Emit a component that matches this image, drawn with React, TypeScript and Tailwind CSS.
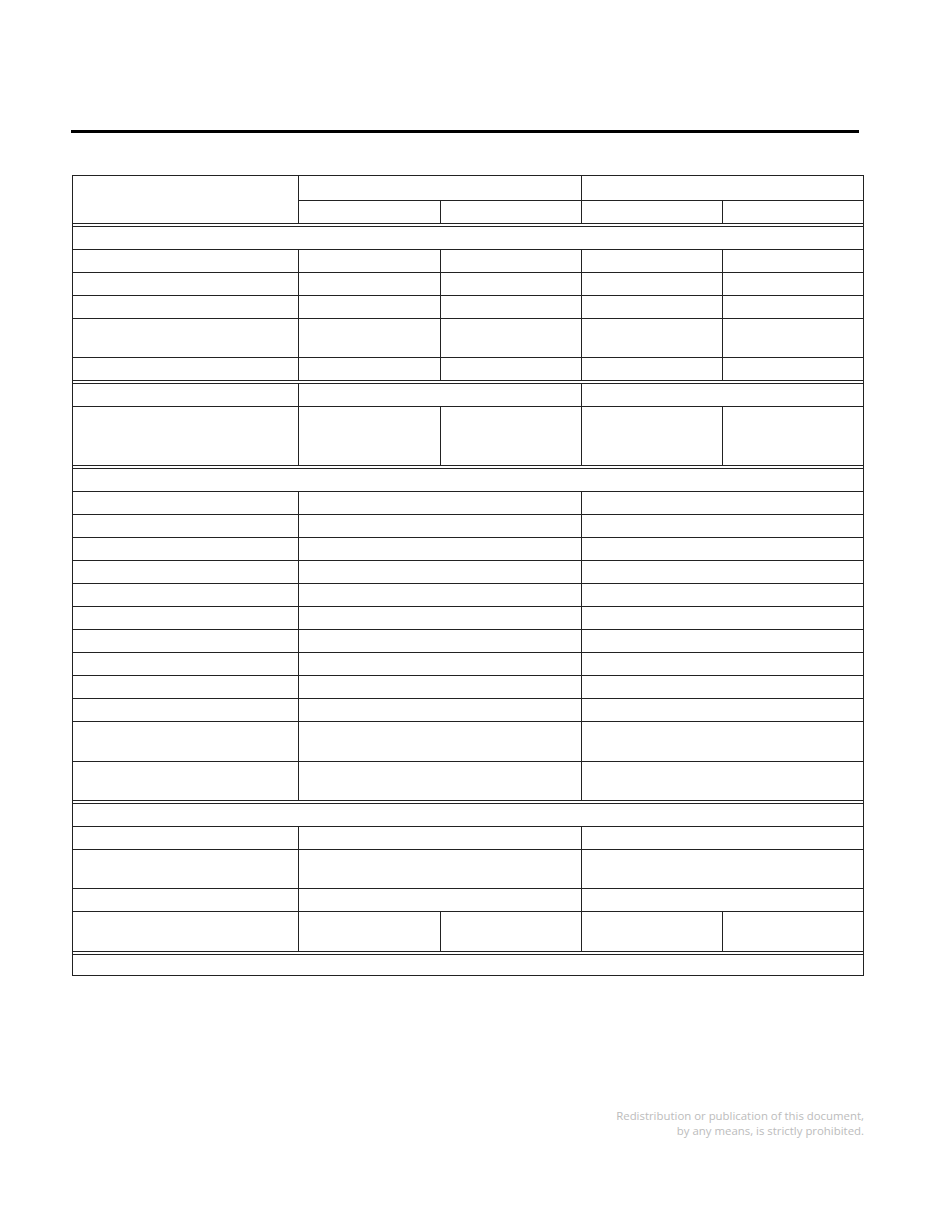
const LINE = "border-[#222]"

// column widths include each cell's right border
const C1 = "w-[226px]"
const C2 = "w-[142px]"
const C3 = "w-[141px]"
const C4 = "w-[141px]"
const C5 = "w-[141px]"
const C23 = "w-[283px]"
const C45 = "w-[282px]"

function Cell({ w, h }: { w: string; h: string }) {
  return <div className={`${w} ${h} shrink-0 border-r border-b ${LINE}`} />
}

function FiveRow({ h }: { h: string }) {
  return (
    <div className="flex">
      <Cell w={C1} h={h} />
      <Cell w={C2} h={h} />
      <Cell w={C3} h={h} />
      <Cell w={C4} h={h} />
      <Cell w={C5} h={h} />
    </div>
  )
}

function ThreeRow({ h }: { h: string }) {
  return (
    <div className="flex">
      <Cell w={C1} h={h} />
      <Cell w={C23} h={h} />
      <Cell w={C45} h={h} />
    </div>
  )
}

function FullRow({ h }: { h: string }) {
  return (
    <div className="flex">
      <Cell w="w-[791px]" h={h} />
    </div>
  )
}

// double rule: 2px gap then a second line
function Spacer() {
  return <FullRow h="h-[3px]" />
}

export default function App() {
  return (
    <div className="w-[935px] h-[1210px] bg-white relative" style={{ fontFamily: '"Open Sans", "Noto Sans", sans-serif' }}>
      <div className="pt-[130px]">
        <div className="ml-[71px] w-[788px] h-[3px] bg-black" />
      </div>

      <div className={`ml-[72px] mt-[42px] w-[792px] border-t border-l ${LINE}`}>
        {/* header */}
        <div className="flex">
          <Cell w={C1} h="h-[48px]" />
          <div className="flex flex-col">
            <div className="flex">
              <Cell w={C23} h="h-[25px]" />
              <Cell w={C45} h="h-[25px]" />
            </div>
            <div className="flex">
              <Cell w={C2} h="h-[23px]" />
              <Cell w={C3} h="h-[23px]" />
              <Cell w={C4} h="h-[23px]" />
              <Cell w={C5} h="h-[23px]" />
            </div>
          </div>
        </div>
        <Spacer />

        <FullRow h="h-[23px]" />
        <FiveRow h="h-[23px]" />
        <FiveRow h="h-[23px]" />
        <FiveRow h="h-[23px]" />
        <FiveRow h="h-[39px]" />
        <FiveRow h="h-[23px]" />
        <Spacer />

        <ThreeRow h="h-[23px]" />
        <FiveRow h="h-[59px]" />
        <Spacer />

        <FullRow h="h-[23px]" />
        <ThreeRow h="h-[23px]" />
        <ThreeRow h="h-[23px]" />
        <ThreeRow h="h-[23px]" />
        <ThreeRow h="h-[23px]" />
        <ThreeRow h="h-[23px]" />
        <ThreeRow h="h-[23px]" />
        <ThreeRow h="h-[23px]" />
        <ThreeRow h="h-[23px]" />
        <ThreeRow h="h-[23px]" />
        <ThreeRow h="h-[23px]" />
        <ThreeRow h="h-[40px]" />
        <ThreeRow h="h-[39px]" />
        <Spacer />

        <FullRow h="h-[23px]" />
        <ThreeRow h="h-[23px]" />
        <ThreeRow h="h-[39px]" />
        <ThreeRow h="h-[23px]" />
        <FiveRow h="h-[40px]" />
        <Spacer />

        <FullRow h="h-[21px]" />
      </div>

      <div className="mt-[132px] mr-[71px] text-right text-[11.4px] leading-[15px] text-[#bcbcbc]">
        <p>Redistribution or publication of this document,</p>
        <p>by any means, is strictly prohibited.</p>
      </div>
    </div>
  )
}
